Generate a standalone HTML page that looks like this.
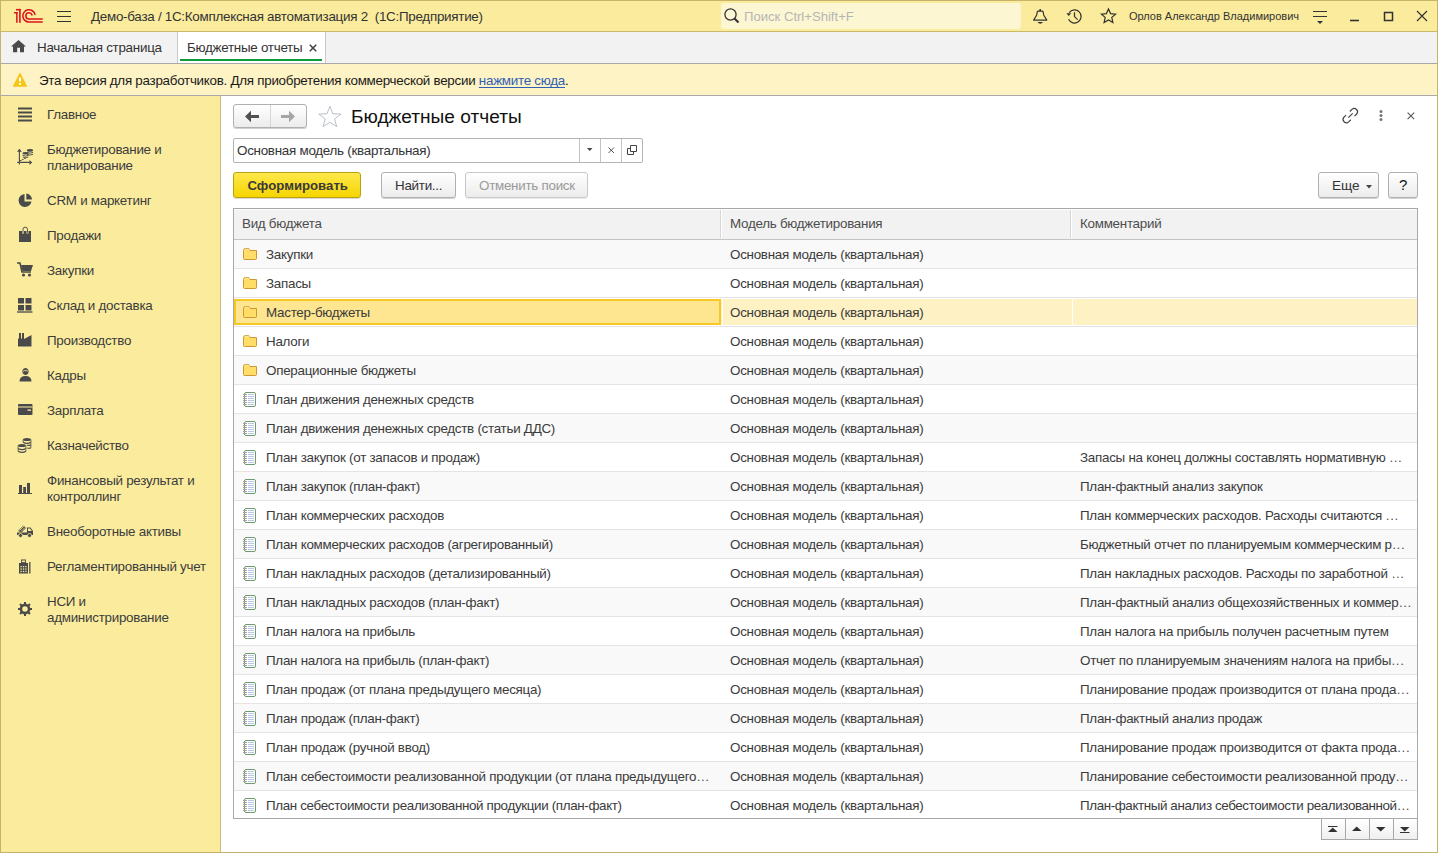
<!DOCTYPE html>
<html><head><meta charset="utf-8">
<style>
*{margin:0;padding:0;box-sizing:border-box}
html,body{width:1438px;height:853px;overflow:hidden;background:#fff}
body{font-family:"Liberation Sans",sans-serif;font-size:13.4px;letter-spacing:-0.27px;color:#333;position:relative}
.a{position:absolute}
.t{position:absolute;white-space:nowrap;line-height:16px;padding-top:1px}
svg{position:absolute;overflow:visible}
#frame{left:0;top:0;width:1438px;height:853px;border:1px solid #c6b46a;pointer-events:none}
#title{left:1px;top:1px;width:1436px;height:31px;background:#fbec9d;border-bottom:1px solid #c9b96d}
#tabs{left:1px;top:32px;width:1436px;height:32px;background:#f2f2f2;border-bottom:1px solid #a9a9a9}
#warn{left:1px;top:64px;width:1436px;height:32px;background:#fef3c5;border-bottom:1px solid #a9a9a9}
#side{left:1px;top:96px;width:220px;height:756px;background:#fbec9d;border-right:1px solid #cbbd7c}
.dk{color:#333}
.tab2{left:177px;top:32px;width:149px;height:31px;background:#fff;border-left:1px solid #c8c8c8;border-right:1px solid #c8c8c8}
.side-t{left:47px;color:#3d3d3d}
.btn{border:1px solid #b0b0b0;border-radius:3px;background:linear-gradient(#ffffff,#ececec);box-shadow:0 1px 0 rgba(0,0,0,.18)}
.row{left:234px;width:1183px;height:29px;background:#fff;border-bottom:1px solid #e4e4e4}
.row.odd{background:#f9f9f9}
.row.sel{background:#fff}
.selcell{left:0;top:1px;width:487px;height:26px;background:#fee58f;border:2px solid #f7c823}
.vdiv{top:1px;width:1px;height:26px;background:#fff}
.row .t{top:6px;color:#3b3b3b}
.el{letter-spacing:0.6px;color:#555;margin-left:0.5px}
.c1{left:32px}
.c2{left:496px}
.c3{left:846px}
.hdr{left:234px;top:209px;width:1183px;height:31px;background:#f2f2f2;border-bottom:1px solid #c4c4c4;border-top:1px solid #fff}
</style></head>
<body>
<!-- title bar -->
<div class="a" id="title"></div>
<svg width="46" height="28" style="left:0;top:0">
 <g fill="#d9141e"><rect x="16.1" y="12" width="1.5" height="10.8"/><rect x="14.1" y="12" width="3.5" height="1.5"/><rect x="19.1" y="8.9" width="1.6" height="13.9"/><rect x="16" y="8.9" width="4.7" height="1.6"/></g>
 <path d="M32 14.98 A3.15 3.15 0 1 0 29 19.05 L42.2 19.05" fill="none" stroke="#d9141e" stroke-width="1.55" stroke-linecap="round"/>
 <path d="M34.97 14.41 A6.15 6.15 0 1 0 29 22.05 L42.2 22.05" fill="none" stroke="#d9141e" stroke-width="1.55" stroke-linecap="round"/>
</svg>
<svg width="14" height="14" style="left:57px;top:10px"><path d="M0 1.5h14M0 6.5h14M0 11.5h14" stroke="#333" stroke-width="1.15"/></svg>
<div class="t dk" style="left:91px;top:8px">Демо-база / 1С:Комплексная автоматизация 2&nbsp; (1С:Предприятие)</div>
<div class="a" style="left:721px;top:3px;width:300px;height:26px;background:#fdf6d3;border-radius:3px"></div>
<svg width="16" height="16" style="left:724px;top:8px"><circle cx="6.5" cy="6.5" r="5.6" fill="none" stroke="#333" stroke-width="1.3"/><path d="M10.5 10.5 L14.5 14.5" stroke="#333" stroke-width="2.2"/></svg>
<div class="t" style="left:744px;top:8px;color:#b5b5b5;letter-spacing:0;font-size:13.1px">Поиск Ctrl+Shift+F</div>
<svg width="24" height="24" style="left:1028px;top:4px"><path d="M5.6 16.1 L8.6 11.3 L9.2 8 Q9.5 7.1 10.5 7.1 L13.9 7.1 Q14.9 7.1 15.2 8 L15.8 11.3 L18.8 16.1 Z" fill="none" stroke="#333" stroke-width="1.2" stroke-linejoin="round"/><rect x="11.4" y="5.1" width="1.6" height="2" fill="#333"/><path d="M9.4 18 L15 18 Q13.6 19.7 12.2 19.7 Q10.8 19.7 9.4 18 Z" fill="#333"/></svg>
<svg width="24" height="24" style="left:1064px;top:4px"><path d="M4.6 15.3 A6.6 6.6 0 1 0 5.2 8.6" fill="none" stroke="#333" stroke-width="1.25"/><path d="M2.4 9.2 L7.3 9.2 L4.6 12 Z" fill="#333"/><path d="M10.5 8.2 V12.6 L13.6 15.6" fill="none" stroke="#333" stroke-width="1.25"/></svg>
<svg width="17" height="16" style="left:1099.5px;top:8px"><path d="M8.5 1 L10.6 5.6 L15.6 6.1 L11.8 9.4 L12.9 14.6 L8.5 12 L4.1 14.6 L5.2 9.4 L1.4 6.1 L6.4 5.6 Z" fill="none" stroke="#333" stroke-width="1.2" stroke-linejoin="miter"/></svg>
<div class="t dk" style="left:1129px;top:7px;letter-spacing:0;font-size:11px">Орлов Александр Владимирович</div>
<svg width="16" height="16" style="left:1312px;top:8px"><path d="M1 3.5h14M1 8.5h14" stroke="#333" stroke-width="1.2"/><path d="M5 13h6l-3 3z" fill="#333"/></svg>
<svg width="12" height="4" style="left:1349px;top:19px"><path d="M1 1.5h9" stroke="#333" stroke-width="1.6"/></svg>
<svg width="12" height="12" style="left:1383px;top:11px"><rect x="1.5" y="1.5" width="8" height="8" fill="none" stroke="#333" stroke-width="1.5"/></svg>
<svg width="12" height="12" style="left:1416px;top:10px"><path d="M1 1L11 11M11 1L1 11" stroke="#333" stroke-width="1.2"/></svg>

<!-- tabs -->
<div class="a" id="tabs"></div>
<svg width="16" height="14" style="left:11px;top:39px"><path d="M7.5 1 L15 7.5 L13 7.5 L13 13.3 L9 13.3 L9 8.7 L6.2 8.7 L6.2 13.3 L2 13.3 L2 7.5 L0 7.5 Z" fill="#4a4a4a"/></svg>
<div class="t dk" style="left:37px;top:39px">Начальная страница</div>
<div class="a tab2"></div>
<div class="t dk" style="left:187px;top:39px">Бюджетные отчеты</div>
<svg width="10" height="10" style="left:309px;top:44px"><path d="M0.8 0.8L7.2 7.2M7.2 0.8L0.8 7.2" stroke="#444" stroke-width="1.6"/></svg>
<div class="a" style="left:180px;top:59px;width:142px;height:2px;background:#0d9a3d"></div>

<!-- warning -->
<div class="a" id="warn"></div>
<svg width="16" height="15" style="left:12px;top:72px"><path d="M7.6 1.1 Q8 0.6 8.4 1.1 L15 13.9 Q15.3 14.7 14.5 14.7 L1.5 14.7 Q0.7 14.7 1 13.9 Z" fill="#f5c518"/><path d="M7 5.5h2v4h-2z M7 11h2v1.8h-2z" fill="#fff"/></svg>
<div class="t" style="left:39px;top:72px;color:#1a1a1a">Эта версия для разработчиков. Для приобретения коммерческой версии <span style="color:#2f5fb5;text-decoration:underline;text-decoration-skip-ink:none;text-underline-offset:1.5px">нажмите сюда</span>.</div>

<!-- sidebar -->
<div class="a" id="side"></div>
<svg style="left:17px;top:107px" width="16" height="16"><path d="M1 1.5h14M1 5.5h14M1 9.5h14M1 13.5h14" stroke="#4a4a4a" stroke-width="1.8"/></svg>
<div class="t side-t" style="top:106px">Главное</div>
<svg style="left:14px;top:146px" width="20" height="20"><path d="M5.4 4 V18.5 M3.2 16.4 H16" fill="none" stroke="#4a4a4a" stroke-width="1.1"/><path d="M3 5.8 L5.4 2.8 L7.9 5.8 Z M15.5 13.9 L18.2 16.4 L15.5 18.9 Z" fill="#4a4a4a"/><path d="M6 14.5 H7.3 L8.3 13.5 H9.3 L10.3 12.5 H11.8" fill="none" stroke="#4a4a4a" stroke-width="0.9"/><g fill="#4a4a4a"><ellipse cx="16" cy="4.4" rx="3.1" ry="1.3"/></g><g fill="none" stroke="#4a4a4a" stroke-width="0.9"><path d="M12.9 6.4 Q16 7.9 19.1 6.4 M12.9 8.3 Q16 9.8 19.1 8.3"/></g><g fill="#4a4a4a"><ellipse cx="11.6" cy="7.3" rx="3.1" ry="1.3"/></g><g fill="none" stroke="#4a4a4a" stroke-width="0.9"><path d="M8.5 9.3 Q11.6 10.8 14.7 9.3 M8.8 11 Q11.6 12.3 14.4 11"/></g></svg>
<div class="t side-t" style="top:141px">Бюджетирование и<br>планирование</div>
<svg style="left:18px;top:193px" width="15" height="15"><path d="M6.5 1 A6.5 6.5 0 1 0 13.5 8.5 L6.5 8.5 Z" fill="#4a4a4a"/><path d="M8.3 0.5 A6.3 6.3 0 0 1 14 6.5 L8.3 6.5Z" fill="#4a4a4a"/></svg>
<div class="t side-t" style="top:192px">CRM и маркетинг</div>
<svg style="left:14px;top:222px" width="22" height="22"><path d="M5 9 H8 V11.5 H10 V9 H12.5 V11.5 H14.5 V9 H17 V20 H5 Z" fill="#4a4a4a"/><path d="M9 10.8 V7.4 A2.25 2.25 0 0 1 13.5 7.4 V10.8" fill="none" stroke="#4a4a4a" stroke-width="0.95"/></svg>
<div class="t side-t" style="top:227px">Продажи</div>
<svg style="left:17px;top:262px" width="17" height="15"><path d="M0 1h3l2 9h9" fill="none" stroke="#4a4a4a" stroke-width="1.6"/><path d="M4 3h12l-2 6H5.5z" fill="#4a4a4a"/><circle cx="6.5" cy="13" r="1.6" fill="#4a4a4a"/><circle cx="12.5" cy="13" r="1.6" fill="#4a4a4a"/></svg>
<div class="t side-t" style="top:262px">Закупки</div>
<svg style="left:17px;top:298px" width="16" height="15"><path d="M1 0h6v5.5H1zM8.5 0h6v5.5h-6zM1 7h6v5.5H1zM8.5 7h6v5.5h-6z" fill="#4a4a4a"/><path d="M0 14h15.5" stroke="#4a4a4a" stroke-width="1.3"/></svg>
<div class="t side-t" style="top:297px">Склад и доставка</div>
<svg style="left:18px;top:332px" width="15" height="15"><path d="M0 14.5V6.5L1 6.5V1h2v5.5h1V1h2v6L13.5 3v11.5z" fill="#4a4a4a"/></svg>
<div class="t side-t" style="top:332px">Производство</div>
<svg style="left:19px;top:367px" width="13" height="15"><path d="M6.5 1A3.2 3.5 0 1 1 6.49 1Z" fill="#4a4a4a"/><path d="M0.5 14.5 Q0.5 9 6.5 9 Q12.5 9 12.5 14.5Z" fill="#4a4a4a"/><path d="M3.8 4.5 Q5 2.8 9.2 4" stroke="#fbec9d" stroke-width="0.8" fill="none"/></svg>
<div class="t side-t" style="top:367px">Кадры</div>
<svg style="left:18px;top:404px" width="15" height="12"><rect x="0" y="0" width="14.5" height="11" rx="1" fill="#4a4a4a"/><path d="M0 3h14.5" stroke="#fbec9d" stroke-width="1"/><path d="M9.5 5.5h3.5v1.3h-3.5z" fill="#fbec9d"/></svg>
<div class="t side-t" style="top:402px">Зарплата</div>
<svg style="left:14px;top:434px" width="22" height="22"><g fill="#4a4a4a"><ellipse cx="13" cy="5.5" rx="3.9" ry="1.5"/><ellipse cx="8" cy="11.5" rx="3.9" ry="1.5"/></g><g fill="none" stroke="#4a4a4a" stroke-width="1.2"><path d="M9.1 8.2 Q13 10.4 16.9 8.2 M13.2 11.2 Q15.5 11.8 16.9 11 M13.2 14 Q15.5 14.6 16.9 13.8 M4.1 14.5 Q8 16.7 11.9 14.5 M4.1 17.3 Q8 19.5 11.9 17.3"/><path d="M9.1 5.5V8.2M16.9 5.5V13.8M4.1 11.5V17.3M11.9 11.5V17.3" stroke-width="0.8"/></g></svg>
<div class="t side-t" style="top:437px">Казначейство</div>
<svg style="left:14px;top:478px" width="22" height="22"><path d="M5 7h3v8.5H5zM9.2 9h2.8v6.5H9.2zM13 5h3v10.5h-3z" fill="#4a4a4a"/><path d="M4 15.5H18" stroke="#4a4a4a" stroke-width="1"/></svg>
<div class="t side-t" style="top:472px">Финансовый результат и<br>контроллинг</div>
<svg style="left:17px;top:524px" width="17" height="14"><path d="M1 7L6.5 1.5L9 4L4.5 8.5z" fill="#4a4a4a"/><path d="M2.5 6.5L7 2M4 7.5L8 3.5" stroke="#fbec9d" stroke-width="0.8"/><path d="M0 8.5h10V3.5h3.5l2.5 3.5v4H0z" fill="#4a4a4a"/><path d="M11 4.5h2l1.8 2.5H11z" fill="#fbec9d"/><circle cx="3.5" cy="11.5" r="2" fill="#4a4a4a" stroke="#fbec9d" stroke-width="0.8"/><circle cx="12.5" cy="11.5" r="2" fill="#4a4a4a" stroke="#fbec9d" stroke-width="0.8"/></svg>
<div class="t side-t" style="top:523px">Внеоборотные активы</div>
<svg style="left:19px;top:559px" width="13" height="15"><path d="M0 4h9v10.5H0z" fill="#4a4a4a"/><path d="M2 0.5h5v4H2z" fill="#4a4a4a"/><path d="M10.8 3v11.5" stroke="#4a4a4a" stroke-width="1.3"/><g fill="#fbec9d"><rect x="1.5" y="7" width="1.3" height="1.3"/><rect x="3.9" y="7" width="1.3" height="1.3"/><rect x="6.3" y="7" width="1.3" height="1.3"/><rect x="1.5" y="9.4" width="1.3" height="1.3"/><rect x="3.9" y="9.4" width="1.3" height="1.3"/><rect x="6.3" y="9.4" width="1.3" height="1.3"/><rect x="1.5" y="11.8" width="1.3" height="1.3"/><rect x="3.9" y="11.8" width="1.3" height="1.3"/><rect x="6.3" y="11.8" width="1.3" height="1.3"/><rect x="2.8" y="1.5" width="3.4" height="1.6"/></g></svg>
<div class="t side-t" style="top:558px">Регламентированный учет</div>
<svg style="left:17px;top:601px" width="16" height="16"><circle cx="8" cy="8" r="4.1" fill="none" stroke="#4a4a4a" stroke-width="2.6"/><g fill="#4a4a4a"><rect x="7" y="1" width="2" height="3" transform="rotate(0 8 8)"/><rect x="7" y="1" width="2" height="3" transform="rotate(45 8 8)"/><rect x="7" y="1" width="2" height="3" transform="rotate(90 8 8)"/><rect x="7" y="1" width="2" height="3" transform="rotate(135 8 8)"/><rect x="7" y="1" width="2" height="3" transform="rotate(180 8 8)"/><rect x="7" y="1" width="2" height="3" transform="rotate(225 8 8)"/><rect x="7" y="1" width="2" height="3" transform="rotate(270 8 8)"/><rect x="7" y="1" width="2" height="3" transform="rotate(315 8 8)"/></g></svg>
<div class="t side-t" style="top:593px">НСИ и<br>администрирование</div>

<!-- content header -->
<div class="a btn" style="left:233px;top:104px;width:74px;height:24px"></div>
<div class="a" style="left:270px;top:105px;width:1px;height:22px;background:#d6d6d6"></div>
<svg width="16" height="13" style="left:244px;top:110px"><path d="M1 6.5 L7 0.8 L7 4.9 L15 4.9 L15 7.9 L7 7.9 L7 12.2 Z" fill="#505050"/></svg>
<svg width="16" height="13" style="left:281px;top:110px"><path d="M14 6.5 L8 0.8 L8 4.9 L0 4.9 L0 7.9 L8 7.9 L8 12.2 Z" fill="#a5a5a5"/></svg>
<svg width="24" height="24" style="left:317.5px;top:104.7px;transform:scale(0.97,0.94);transform-origin:12px 12px"><path d="M11.90 0.60 L14.84 8.55 L23.31 8.89 L16.66 14.15 L18.95 22.31 L11.90 17.60 L4.85 22.31 L7.14 14.15 L0.49 8.89 L8.96 8.55 Z" fill="#fff" stroke="#aeb6bf" stroke-width="0.9" stroke-linejoin="miter"/></svg>
<div class="t" style="left:351px;top:104px;letter-spacing:0;font-size:19.1px;line-height:24px;color:#111">Бюджетные отчеты</div>
<svg width="20" height="20" style="left:1340px;top:105px"><g fill="none" stroke="#444" stroke-width="1.2"><path d="M9.85 6.49 L11.97 4.37 A3.3 3.3 0 0 1 16.63 9.03 L14.51 11.15"/><path d="M6.09 10.05 L3.97 12.17 A3.3 3.3 0 0 0 8.63 16.83 L10.75 14.71"/><path d="M8.3 12.7 L12.7 8.3"/></g></svg>
<svg width="4" height="14" style="left:1378.5px;top:109px"><circle cx="2" cy="2.4" r="1.5" fill="#777"/><circle cx="2" cy="6.5" r="1.5" fill="#777"/><circle cx="2" cy="10.5" r="1.5" fill="#777"/></svg>
<svg width="10" height="10" style="left:1406.5px;top:111.5px"><path d="M0.6 0.6L7.2 7.2M7.2 0.6L0.6 7.2" stroke="#555" stroke-width="1.05"/></svg>

<!-- input -->
<div class="a" style="left:233px;top:138px;width:410px;height:25px;border:1px solid #b3b3b3;border-radius:2px;background:#fff"></div>
<div class="a" style="left:579px;top:139px;width:1px;height:23px;background:#c3c3c3"></div>
<div class="a" style="left:600px;top:139px;width:1px;height:23px;background:#c3c3c3"></div>
<div class="a" style="left:621px;top:139px;width:1px;height:23px;background:#c3c3c3"></div>
<div class="t" style="left:237px;top:142px;color:#333">Основная модель (квартальная)</div>
<svg width="8" height="5" style="left:587px;top:148px"><path d="M0 0h5.5l-2.75 3z" fill="#444"/></svg>
<svg width="9" height="9" style="left:607.5px;top:146.5px"><path d="M0.5 0.5L6 6M6 0.5L0.5 6" stroke="#555" stroke-width="1"/></svg>
<svg width="12" height="12" style="left:626px;top:144px"><path d="M4.5 1.5h6v6h-6z" fill="none" stroke="#444" stroke-width="1"/><path d="M4.5 4.5h-3v6h6v-3" fill="none" stroke="#444" stroke-width="1"/></svg>

<!-- buttons -->
<div class="a" style="left:233px;top:172px;width:128px;height:26px;border:1px solid #bca20a;border-radius:3px;background:linear-gradient(#fde84c,#f6d500);box-shadow:0 1px 0 rgba(0,0,0,.15)"></div>
<div class="t" style="left:247.5px;top:176.5px;font-weight:bold;color:#3a3a3a;letter-spacing:0;font-size:13.2px">Сформировать</div>
<div class="a btn" style="left:381px;top:172px;width:75px;height:26px"></div>
<div class="t" style="left:395px;top:177px;color:#333">Найти...</div>
<div class="a btn" style="left:465px;top:172px;width:123px;height:26px;border-color:#c8c8c8;box-shadow:0 1px 0 rgba(0,0,0,.08)"></div>
<div class="t" style="left:479px;top:177px;color:#9a9a9a">Отменить поиск</div>
<div class="a btn" style="left:1318px;top:172px;width:61px;height:26px"></div>
<div class="t" style="left:1332px;top:176.5px;color:#333;letter-spacing:0;font-size:13.6px">Еще</div>
<svg width="7" height="4" style="left:1366px;top:185px"><path d="M0 0h6l-3 3.5z" fill="#444"/></svg>
<div class="a btn" style="left:1388px;top:172px;width:30px;height:26px"></div>
<div class="t" style="left:1399px;top:176px;color:#111;letter-spacing:0;font-size:15px">?</div>

<!-- table -->
<div class="a" style="left:233px;top:208px;width:1185px;height:611px;border:1px solid #a8a8a8"></div>
<div class="a hdr"></div>
<div class="a" style="left:720px;top:210px;width:1px;height:28px;background:#d6d6d6"></div>
<div class="a" style="left:721px;top:210px;width:1px;height:28px;background:#fff"></div>
<div class="a" style="left:1070px;top:210px;width:1px;height:28px;background:#d6d6d6"></div>
<div class="a" style="left:1071px;top:210px;width:1px;height:28px;background:#fff"></div>
<div class="t" style="left:242px;top:215px;color:#4d4d4d">Вид бюджета</div>
<div class="t" style="left:730px;top:215px;color:#4d4d4d">Модель бюджетирования</div>
<div class="t" style="left:1080px;top:215px;color:#4d4d4d">Комментарий</div>
<div class="a" style="left:234px;top:240px;width:1183px;height:578px;overflow:hidden">
<div style="position:relative;left:-234px;top:-240px">
<div class="a row odd" style="top:240px"><svg class="ic" width="16" height="16" viewBox="0 0 16 16" style="left:8px;top:7px"><path d="M1.5 3.5 Q1.5 1.5 3.5 1.5 L6 1.5 Q7 1.5 7.5 2.5 L8 3.5 L14.5 3.5 L14.5 11.5 Q14.5 12.5 13.5 12.5 L2.5 12.5 Q1.5 12.5 1.5 11.5 Z" fill="#ffdd66" stroke="#cf9636" stroke-width="1"/><path d="M2.5 3.5 Q3 2.3 4 2.3 L6 2.3 Q6.8 2.5 7.2 3.5" fill="none" stroke="#fff09a" stroke-width="1"/></svg><div class="t c1">Закупки</div><div class="t c2">Основная модель (квартальная)</div><div class="t c3"></div></div>
<div class="a row" style="top:269px"><svg class="ic" width="16" height="16" viewBox="0 0 16 16" style="left:8px;top:7px"><path d="M1.5 3.5 Q1.5 1.5 3.5 1.5 L6 1.5 Q7 1.5 7.5 2.5 L8 3.5 L14.5 3.5 L14.5 11.5 Q14.5 12.5 13.5 12.5 L2.5 12.5 Q1.5 12.5 1.5 11.5 Z" fill="#ffdd66" stroke="#cf9636" stroke-width="1"/><path d="M2.5 3.5 Q3 2.3 4 2.3 L6 2.3 Q6.8 2.5 7.2 3.5" fill="none" stroke="#fff09a" stroke-width="1"/></svg><div class="t c1">Запасы</div><div class="t c2">Основная модель (квартальная)</div><div class="t c3"></div></div>
<div class="a row sel" style="top:298px"><div class="a" style="left:0;top:1px;width:1183px;height:26px;background:#fef1c3"></div><div class="a selcell"></div><div class="a vdiv" style="left:488px"></div><div class="a vdiv" style="left:838px"></div><svg class="ic" width="16" height="16" viewBox="0 0 16 16" style="left:8px;top:7px"><path d="M1.5 3.5 Q1.5 1.5 3.5 1.5 L6 1.5 Q7 1.5 7.5 2.5 L8 3.5 L14.5 3.5 L14.5 11.5 Q14.5 12.5 13.5 12.5 L2.5 12.5 Q1.5 12.5 1.5 11.5 Z" fill="#ffdd66" stroke="#cf9636" stroke-width="1"/><path d="M2.5 3.5 Q3 2.3 4 2.3 L6 2.3 Q6.8 2.5 7.2 3.5" fill="none" stroke="#fff09a" stroke-width="1"/></svg><div class="t c1">Мастер-бюджеты</div><div class="t c2">Основная модель (квартальная)</div><div class="t c3"></div></div>
<div class="a row" style="top:327px"><svg class="ic" width="16" height="16" viewBox="0 0 16 16" style="left:8px;top:7px"><path d="M1.5 3.5 Q1.5 1.5 3.5 1.5 L6 1.5 Q7 1.5 7.5 2.5 L8 3.5 L14.5 3.5 L14.5 11.5 Q14.5 12.5 13.5 12.5 L2.5 12.5 Q1.5 12.5 1.5 11.5 Z" fill="#ffdd66" stroke="#cf9636" stroke-width="1"/><path d="M2.5 3.5 Q3 2.3 4 2.3 L6 2.3 Q6.8 2.5 7.2 3.5" fill="none" stroke="#fff09a" stroke-width="1"/></svg><div class="t c1">Налоги</div><div class="t c2">Основная модель (квартальная)</div><div class="t c3"></div></div>
<div class="a row odd" style="top:356px"><svg class="ic" width="16" height="16" viewBox="0 0 16 16" style="left:8px;top:7px"><path d="M1.5 3.5 Q1.5 1.5 3.5 1.5 L6 1.5 Q7 1.5 7.5 2.5 L8 3.5 L14.5 3.5 L14.5 11.5 Q14.5 12.5 13.5 12.5 L2.5 12.5 Q1.5 12.5 1.5 11.5 Z" fill="#ffdd66" stroke="#cf9636" stroke-width="1"/><path d="M2.5 3.5 Q3 2.3 4 2.3 L6 2.3 Q6.8 2.5 7.2 3.5" fill="none" stroke="#fff09a" stroke-width="1"/></svg><div class="t c1">Операционные бюджеты</div><div class="t c2">Основная модель (квартальная)</div><div class="t c3"></div></div>
<div class="a row" style="top:385px"><svg class="ic" width="16" height="16" viewBox="0 0 16 16" style="left:8px;top:7px"><rect x="2.5" y="0.5" width="11" height="14" rx="1.5" fill="#fff" stroke="#6e9b6e" stroke-width="1"/><path d="M1 2.5h4" stroke="#a3a3a3" stroke-width="1"/><path d="M6 2.5h6" stroke="#b9c6e8" stroke-width="1"/><path d="M1 4.5h4" stroke="#a3a3a3" stroke-width="1"/><path d="M6 4.5h6" stroke="#b9c6e8" stroke-width="1"/><path d="M1 6.5h4" stroke="#a3a3a3" stroke-width="1"/><path d="M6 6.5h6" stroke="#b9c6e8" stroke-width="1"/><path d="M1 8.5h4" stroke="#a3a3a3" stroke-width="1"/><path d="M6 8.5h6" stroke="#b9c6e8" stroke-width="1"/><path d="M1 10.5h4" stroke="#a3a3a3" stroke-width="1"/><path d="M6 10.5h6" stroke="#b9c6e8" stroke-width="1"/><path d="M1 12.5h4" stroke="#a3a3a3" stroke-width="1"/><path d="M6 12.5h6" stroke="#b9c6e8" stroke-width="1"/></svg><div class="t c1">План движения денежных средств</div><div class="t c2">Основная модель (квартальная)</div><div class="t c3"></div></div>
<div class="a row odd" style="top:414px"><svg class="ic" width="16" height="16" viewBox="0 0 16 16" style="left:8px;top:7px"><rect x="2.5" y="0.5" width="11" height="14" rx="1.5" fill="#fff" stroke="#6e9b6e" stroke-width="1"/><path d="M1 2.5h4" stroke="#a3a3a3" stroke-width="1"/><path d="M6 2.5h6" stroke="#b9c6e8" stroke-width="1"/><path d="M1 4.5h4" stroke="#a3a3a3" stroke-width="1"/><path d="M6 4.5h6" stroke="#b9c6e8" stroke-width="1"/><path d="M1 6.5h4" stroke="#a3a3a3" stroke-width="1"/><path d="M6 6.5h6" stroke="#b9c6e8" stroke-width="1"/><path d="M1 8.5h4" stroke="#a3a3a3" stroke-width="1"/><path d="M6 8.5h6" stroke="#b9c6e8" stroke-width="1"/><path d="M1 10.5h4" stroke="#a3a3a3" stroke-width="1"/><path d="M6 10.5h6" stroke="#b9c6e8" stroke-width="1"/><path d="M1 12.5h4" stroke="#a3a3a3" stroke-width="1"/><path d="M6 12.5h6" stroke="#b9c6e8" stroke-width="1"/></svg><div class="t c1">План движения денежных средств (статьи ДДС)</div><div class="t c2">Основная модель (квартальная)</div><div class="t c3"></div></div>
<div class="a row" style="top:443px"><svg class="ic" width="16" height="16" viewBox="0 0 16 16" style="left:8px;top:7px"><rect x="2.5" y="0.5" width="11" height="14" rx="1.5" fill="#fff" stroke="#6e9b6e" stroke-width="1"/><path d="M1 2.5h4" stroke="#a3a3a3" stroke-width="1"/><path d="M6 2.5h6" stroke="#b9c6e8" stroke-width="1"/><path d="M1 4.5h4" stroke="#a3a3a3" stroke-width="1"/><path d="M6 4.5h6" stroke="#b9c6e8" stroke-width="1"/><path d="M1 6.5h4" stroke="#a3a3a3" stroke-width="1"/><path d="M6 6.5h6" stroke="#b9c6e8" stroke-width="1"/><path d="M1 8.5h4" stroke="#a3a3a3" stroke-width="1"/><path d="M6 8.5h6" stroke="#b9c6e8" stroke-width="1"/><path d="M1 10.5h4" stroke="#a3a3a3" stroke-width="1"/><path d="M6 10.5h6" stroke="#b9c6e8" stroke-width="1"/><path d="M1 12.5h4" stroke="#a3a3a3" stroke-width="1"/><path d="M6 12.5h6" stroke="#b9c6e8" stroke-width="1"/></svg><div class="t c1">План закупок (от запасов и продаж)</div><div class="t c2">Основная модель (квартальная)</div><div class="t c3">Запасы на конец должны составлять нормативную <span class="el">...</span></div></div>
<div class="a row odd" style="top:472px"><svg class="ic" width="16" height="16" viewBox="0 0 16 16" style="left:8px;top:7px"><rect x="2.5" y="0.5" width="11" height="14" rx="1.5" fill="#fff" stroke="#6e9b6e" stroke-width="1"/><path d="M1 2.5h4" stroke="#a3a3a3" stroke-width="1"/><path d="M6 2.5h6" stroke="#b9c6e8" stroke-width="1"/><path d="M1 4.5h4" stroke="#a3a3a3" stroke-width="1"/><path d="M6 4.5h6" stroke="#b9c6e8" stroke-width="1"/><path d="M1 6.5h4" stroke="#a3a3a3" stroke-width="1"/><path d="M6 6.5h6" stroke="#b9c6e8" stroke-width="1"/><path d="M1 8.5h4" stroke="#a3a3a3" stroke-width="1"/><path d="M6 8.5h6" stroke="#b9c6e8" stroke-width="1"/><path d="M1 10.5h4" stroke="#a3a3a3" stroke-width="1"/><path d="M6 10.5h6" stroke="#b9c6e8" stroke-width="1"/><path d="M1 12.5h4" stroke="#a3a3a3" stroke-width="1"/><path d="M6 12.5h6" stroke="#b9c6e8" stroke-width="1"/></svg><div class="t c1">План закупок (план-факт)</div><div class="t c2">Основная модель (квартальная)</div><div class="t c3">План-фактный анализ закупок</div></div>
<div class="a row" style="top:501px"><svg class="ic" width="16" height="16" viewBox="0 0 16 16" style="left:8px;top:7px"><rect x="2.5" y="0.5" width="11" height="14" rx="1.5" fill="#fff" stroke="#6e9b6e" stroke-width="1"/><path d="M1 2.5h4" stroke="#a3a3a3" stroke-width="1"/><path d="M6 2.5h6" stroke="#b9c6e8" stroke-width="1"/><path d="M1 4.5h4" stroke="#a3a3a3" stroke-width="1"/><path d="M6 4.5h6" stroke="#b9c6e8" stroke-width="1"/><path d="M1 6.5h4" stroke="#a3a3a3" stroke-width="1"/><path d="M6 6.5h6" stroke="#b9c6e8" stroke-width="1"/><path d="M1 8.5h4" stroke="#a3a3a3" stroke-width="1"/><path d="M6 8.5h6" stroke="#b9c6e8" stroke-width="1"/><path d="M1 10.5h4" stroke="#a3a3a3" stroke-width="1"/><path d="M6 10.5h6" stroke="#b9c6e8" stroke-width="1"/><path d="M1 12.5h4" stroke="#a3a3a3" stroke-width="1"/><path d="M6 12.5h6" stroke="#b9c6e8" stroke-width="1"/></svg><div class="t c1">План коммерческих расходов</div><div class="t c2">Основная модель (квартальная)</div><div class="t c3">План коммерческих расходов. Расходы считаются <span class="el">...</span></div></div>
<div class="a row odd" style="top:530px"><svg class="ic" width="16" height="16" viewBox="0 0 16 16" style="left:8px;top:7px"><rect x="2.5" y="0.5" width="11" height="14" rx="1.5" fill="#fff" stroke="#6e9b6e" stroke-width="1"/><path d="M1 2.5h4" stroke="#a3a3a3" stroke-width="1"/><path d="M6 2.5h6" stroke="#b9c6e8" stroke-width="1"/><path d="M1 4.5h4" stroke="#a3a3a3" stroke-width="1"/><path d="M6 4.5h6" stroke="#b9c6e8" stroke-width="1"/><path d="M1 6.5h4" stroke="#a3a3a3" stroke-width="1"/><path d="M6 6.5h6" stroke="#b9c6e8" stroke-width="1"/><path d="M1 8.5h4" stroke="#a3a3a3" stroke-width="1"/><path d="M6 8.5h6" stroke="#b9c6e8" stroke-width="1"/><path d="M1 10.5h4" stroke="#a3a3a3" stroke-width="1"/><path d="M6 10.5h6" stroke="#b9c6e8" stroke-width="1"/><path d="M1 12.5h4" stroke="#a3a3a3" stroke-width="1"/><path d="M6 12.5h6" stroke="#b9c6e8" stroke-width="1"/></svg><div class="t c1">План коммерческих расходов (агрегированный)</div><div class="t c2">Основная модель (квартальная)</div><div class="t c3">Бюджетный отчет по планируемым коммерческим р<span class="el">...</span></div></div>
<div class="a row" style="top:559px"><svg class="ic" width="16" height="16" viewBox="0 0 16 16" style="left:8px;top:7px"><rect x="2.5" y="0.5" width="11" height="14" rx="1.5" fill="#fff" stroke="#6e9b6e" stroke-width="1"/><path d="M1 2.5h4" stroke="#a3a3a3" stroke-width="1"/><path d="M6 2.5h6" stroke="#b9c6e8" stroke-width="1"/><path d="M1 4.5h4" stroke="#a3a3a3" stroke-width="1"/><path d="M6 4.5h6" stroke="#b9c6e8" stroke-width="1"/><path d="M1 6.5h4" stroke="#a3a3a3" stroke-width="1"/><path d="M6 6.5h6" stroke="#b9c6e8" stroke-width="1"/><path d="M1 8.5h4" stroke="#a3a3a3" stroke-width="1"/><path d="M6 8.5h6" stroke="#b9c6e8" stroke-width="1"/><path d="M1 10.5h4" stroke="#a3a3a3" stroke-width="1"/><path d="M6 10.5h6" stroke="#b9c6e8" stroke-width="1"/><path d="M1 12.5h4" stroke="#a3a3a3" stroke-width="1"/><path d="M6 12.5h6" stroke="#b9c6e8" stroke-width="1"/></svg><div class="t c1">План накладных расходов (детализированный)</div><div class="t c2">Основная модель (квартальная)</div><div class="t c3">План накладных расходов. Расходы по заработной <span class="el">...</span></div></div>
<div class="a row odd" style="top:588px"><svg class="ic" width="16" height="16" viewBox="0 0 16 16" style="left:8px;top:7px"><rect x="2.5" y="0.5" width="11" height="14" rx="1.5" fill="#fff" stroke="#6e9b6e" stroke-width="1"/><path d="M1 2.5h4" stroke="#a3a3a3" stroke-width="1"/><path d="M6 2.5h6" stroke="#b9c6e8" stroke-width="1"/><path d="M1 4.5h4" stroke="#a3a3a3" stroke-width="1"/><path d="M6 4.5h6" stroke="#b9c6e8" stroke-width="1"/><path d="M1 6.5h4" stroke="#a3a3a3" stroke-width="1"/><path d="M6 6.5h6" stroke="#b9c6e8" stroke-width="1"/><path d="M1 8.5h4" stroke="#a3a3a3" stroke-width="1"/><path d="M6 8.5h6" stroke="#b9c6e8" stroke-width="1"/><path d="M1 10.5h4" stroke="#a3a3a3" stroke-width="1"/><path d="M6 10.5h6" stroke="#b9c6e8" stroke-width="1"/><path d="M1 12.5h4" stroke="#a3a3a3" stroke-width="1"/><path d="M6 12.5h6" stroke="#b9c6e8" stroke-width="1"/></svg><div class="t c1">План накладных расходов (план-факт)</div><div class="t c2">Основная модель (квартальная)</div><div class="t c3">План-фактный анализ общехозяйственных и коммер<span class="el">...</span></div></div>
<div class="a row" style="top:617px"><svg class="ic" width="16" height="16" viewBox="0 0 16 16" style="left:8px;top:7px"><rect x="2.5" y="0.5" width="11" height="14" rx="1.5" fill="#fff" stroke="#6e9b6e" stroke-width="1"/><path d="M1 2.5h4" stroke="#a3a3a3" stroke-width="1"/><path d="M6 2.5h6" stroke="#b9c6e8" stroke-width="1"/><path d="M1 4.5h4" stroke="#a3a3a3" stroke-width="1"/><path d="M6 4.5h6" stroke="#b9c6e8" stroke-width="1"/><path d="M1 6.5h4" stroke="#a3a3a3" stroke-width="1"/><path d="M6 6.5h6" stroke="#b9c6e8" stroke-width="1"/><path d="M1 8.5h4" stroke="#a3a3a3" stroke-width="1"/><path d="M6 8.5h6" stroke="#b9c6e8" stroke-width="1"/><path d="M1 10.5h4" stroke="#a3a3a3" stroke-width="1"/><path d="M6 10.5h6" stroke="#b9c6e8" stroke-width="1"/><path d="M1 12.5h4" stroke="#a3a3a3" stroke-width="1"/><path d="M6 12.5h6" stroke="#b9c6e8" stroke-width="1"/></svg><div class="t c1">План налога на прибыль</div><div class="t c2">Основная модель (квартальная)</div><div class="t c3">План налога на прибыль получен расчетным путем</div></div>
<div class="a row odd" style="top:646px"><svg class="ic" width="16" height="16" viewBox="0 0 16 16" style="left:8px;top:7px"><rect x="2.5" y="0.5" width="11" height="14" rx="1.5" fill="#fff" stroke="#6e9b6e" stroke-width="1"/><path d="M1 2.5h4" stroke="#a3a3a3" stroke-width="1"/><path d="M6 2.5h6" stroke="#b9c6e8" stroke-width="1"/><path d="M1 4.5h4" stroke="#a3a3a3" stroke-width="1"/><path d="M6 4.5h6" stroke="#b9c6e8" stroke-width="1"/><path d="M1 6.5h4" stroke="#a3a3a3" stroke-width="1"/><path d="M6 6.5h6" stroke="#b9c6e8" stroke-width="1"/><path d="M1 8.5h4" stroke="#a3a3a3" stroke-width="1"/><path d="M6 8.5h6" stroke="#b9c6e8" stroke-width="1"/><path d="M1 10.5h4" stroke="#a3a3a3" stroke-width="1"/><path d="M6 10.5h6" stroke="#b9c6e8" stroke-width="1"/><path d="M1 12.5h4" stroke="#a3a3a3" stroke-width="1"/><path d="M6 12.5h6" stroke="#b9c6e8" stroke-width="1"/></svg><div class="t c1">План налога на прибыль (план-факт)</div><div class="t c2">Основная модель (квартальная)</div><div class="t c3">Отчет по планируемым значениям налога на прибы<span class="el">...</span></div></div>
<div class="a row" style="top:675px"><svg class="ic" width="16" height="16" viewBox="0 0 16 16" style="left:8px;top:7px"><rect x="2.5" y="0.5" width="11" height="14" rx="1.5" fill="#fff" stroke="#6e9b6e" stroke-width="1"/><path d="M1 2.5h4" stroke="#a3a3a3" stroke-width="1"/><path d="M6 2.5h6" stroke="#b9c6e8" stroke-width="1"/><path d="M1 4.5h4" stroke="#a3a3a3" stroke-width="1"/><path d="M6 4.5h6" stroke="#b9c6e8" stroke-width="1"/><path d="M1 6.5h4" stroke="#a3a3a3" stroke-width="1"/><path d="M6 6.5h6" stroke="#b9c6e8" stroke-width="1"/><path d="M1 8.5h4" stroke="#a3a3a3" stroke-width="1"/><path d="M6 8.5h6" stroke="#b9c6e8" stroke-width="1"/><path d="M1 10.5h4" stroke="#a3a3a3" stroke-width="1"/><path d="M6 10.5h6" stroke="#b9c6e8" stroke-width="1"/><path d="M1 12.5h4" stroke="#a3a3a3" stroke-width="1"/><path d="M6 12.5h6" stroke="#b9c6e8" stroke-width="1"/></svg><div class="t c1">План продаж (от плана предыдущего месяца)</div><div class="t c2">Основная модель (квартальная)</div><div class="t c3">Планирование продаж производится от плана прода<span class="el">...</span></div></div>
<div class="a row odd" style="top:704px"><svg class="ic" width="16" height="16" viewBox="0 0 16 16" style="left:8px;top:7px"><rect x="2.5" y="0.5" width="11" height="14" rx="1.5" fill="#fff" stroke="#6e9b6e" stroke-width="1"/><path d="M1 2.5h4" stroke="#a3a3a3" stroke-width="1"/><path d="M6 2.5h6" stroke="#b9c6e8" stroke-width="1"/><path d="M1 4.5h4" stroke="#a3a3a3" stroke-width="1"/><path d="M6 4.5h6" stroke="#b9c6e8" stroke-width="1"/><path d="M1 6.5h4" stroke="#a3a3a3" stroke-width="1"/><path d="M6 6.5h6" stroke="#b9c6e8" stroke-width="1"/><path d="M1 8.5h4" stroke="#a3a3a3" stroke-width="1"/><path d="M6 8.5h6" stroke="#b9c6e8" stroke-width="1"/><path d="M1 10.5h4" stroke="#a3a3a3" stroke-width="1"/><path d="M6 10.5h6" stroke="#b9c6e8" stroke-width="1"/><path d="M1 12.5h4" stroke="#a3a3a3" stroke-width="1"/><path d="M6 12.5h6" stroke="#b9c6e8" stroke-width="1"/></svg><div class="t c1">План продаж (план-факт)</div><div class="t c2">Основная модель (квартальная)</div><div class="t c3">План-фактный анализ продаж</div></div>
<div class="a row" style="top:733px"><svg class="ic" width="16" height="16" viewBox="0 0 16 16" style="left:8px;top:7px"><rect x="2.5" y="0.5" width="11" height="14" rx="1.5" fill="#fff" stroke="#6e9b6e" stroke-width="1"/><path d="M1 2.5h4" stroke="#a3a3a3" stroke-width="1"/><path d="M6 2.5h6" stroke="#b9c6e8" stroke-width="1"/><path d="M1 4.5h4" stroke="#a3a3a3" stroke-width="1"/><path d="M6 4.5h6" stroke="#b9c6e8" stroke-width="1"/><path d="M1 6.5h4" stroke="#a3a3a3" stroke-width="1"/><path d="M6 6.5h6" stroke="#b9c6e8" stroke-width="1"/><path d="M1 8.5h4" stroke="#a3a3a3" stroke-width="1"/><path d="M6 8.5h6" stroke="#b9c6e8" stroke-width="1"/><path d="M1 10.5h4" stroke="#a3a3a3" stroke-width="1"/><path d="M6 10.5h6" stroke="#b9c6e8" stroke-width="1"/><path d="M1 12.5h4" stroke="#a3a3a3" stroke-width="1"/><path d="M6 12.5h6" stroke="#b9c6e8" stroke-width="1"/></svg><div class="t c1">План продаж (ручной ввод)</div><div class="t c2">Основная модель (квартальная)</div><div class="t c3">Планирование продаж производится от факта прода<span class="el">...</span></div></div>
<div class="a row odd" style="top:762px"><svg class="ic" width="16" height="16" viewBox="0 0 16 16" style="left:8px;top:7px"><rect x="2.5" y="0.5" width="11" height="14" rx="1.5" fill="#fff" stroke="#6e9b6e" stroke-width="1"/><path d="M1 2.5h4" stroke="#a3a3a3" stroke-width="1"/><path d="M6 2.5h6" stroke="#b9c6e8" stroke-width="1"/><path d="M1 4.5h4" stroke="#a3a3a3" stroke-width="1"/><path d="M6 4.5h6" stroke="#b9c6e8" stroke-width="1"/><path d="M1 6.5h4" stroke="#a3a3a3" stroke-width="1"/><path d="M6 6.5h6" stroke="#b9c6e8" stroke-width="1"/><path d="M1 8.5h4" stroke="#a3a3a3" stroke-width="1"/><path d="M6 8.5h6" stroke="#b9c6e8" stroke-width="1"/><path d="M1 10.5h4" stroke="#a3a3a3" stroke-width="1"/><path d="M6 10.5h6" stroke="#b9c6e8" stroke-width="1"/><path d="M1 12.5h4" stroke="#a3a3a3" stroke-width="1"/><path d="M6 12.5h6" stroke="#b9c6e8" stroke-width="1"/></svg><div class="t c1">План себестоимости реализованной продукции (от плана предыдущего<span class="el">...</span></div><div class="t c2">Основная модель (квартальная)</div><div class="t c3">Планирование себестоимости реализованной проду<span class="el">...</span></div></div>
<div class="a row" style="top:791px"><svg class="ic" width="16" height="16" viewBox="0 0 16 16" style="left:8px;top:7px"><rect x="2.5" y="0.5" width="11" height="14" rx="1.5" fill="#fff" stroke="#6e9b6e" stroke-width="1"/><path d="M1 2.5h4" stroke="#a3a3a3" stroke-width="1"/><path d="M6 2.5h6" stroke="#b9c6e8" stroke-width="1"/><path d="M1 4.5h4" stroke="#a3a3a3" stroke-width="1"/><path d="M6 4.5h6" stroke="#b9c6e8" stroke-width="1"/><path d="M1 6.5h4" stroke="#a3a3a3" stroke-width="1"/><path d="M6 6.5h6" stroke="#b9c6e8" stroke-width="1"/><path d="M1 8.5h4" stroke="#a3a3a3" stroke-width="1"/><path d="M6 8.5h6" stroke="#b9c6e8" stroke-width="1"/><path d="M1 10.5h4" stroke="#a3a3a3" stroke-width="1"/><path d="M6 10.5h6" stroke="#b9c6e8" stroke-width="1"/><path d="M1 12.5h4" stroke="#a3a3a3" stroke-width="1"/><path d="M6 12.5h6" stroke="#b9c6e8" stroke-width="1"/></svg><div class="t c1" style="letter-spacing:-0.35px">План себестоимости реализованной продукции (план-факт)</div><div class="t c2">Основная модель (квартальная)</div><div class="t c3" style="letter-spacing:-0.4px">План-фактный анализ себестоимости реализованной<span class="el">...</span></div></div>
</div></div>

<!-- scroll buttons -->
<div class="a" style="left:1321px;top:818px;width:97px;height:22px;border:1px solid #a8a8a8;background:linear-gradient(#ffffff,#efefef)"></div>
<div class="a" style="left:1345px;top:818px;width:1px;height:21px;background:#a8a8a8"></div>
<div class="a" style="left:1369px;top:818px;width:1px;height:21px;background:#a8a8a8"></div>
<div class="a" style="left:1393px;top:818px;width:1px;height:21px;background:#a8a8a8"></div>
<svg width="10" height="8" style="left:1328px;top:826px"><path d="M0 0.5h9.5" stroke="#333" stroke-width="1"/><path d="M4.75 1.5L9.5 6H0z" fill="#333"/></svg>
<svg width="10" height="8" style="left:1352px;top:826px"><path d="M4.75 0.5L9.5 5H0z" fill="#333"/></svg>
<svg width="10" height="8" style="left:1376px;top:827px"><path d="M0 0h9.5L4.75 4.5z" fill="#333"/></svg>
<svg width="10" height="8" style="left:1400px;top:827px"><path d="M0 0h9.5L4.75 4.5z" fill="#333"/><path d="M0 5.5h9.5" stroke="#333" stroke-width="1"/></svg>

<div class="a" id="frame"></div>
</body></html>
